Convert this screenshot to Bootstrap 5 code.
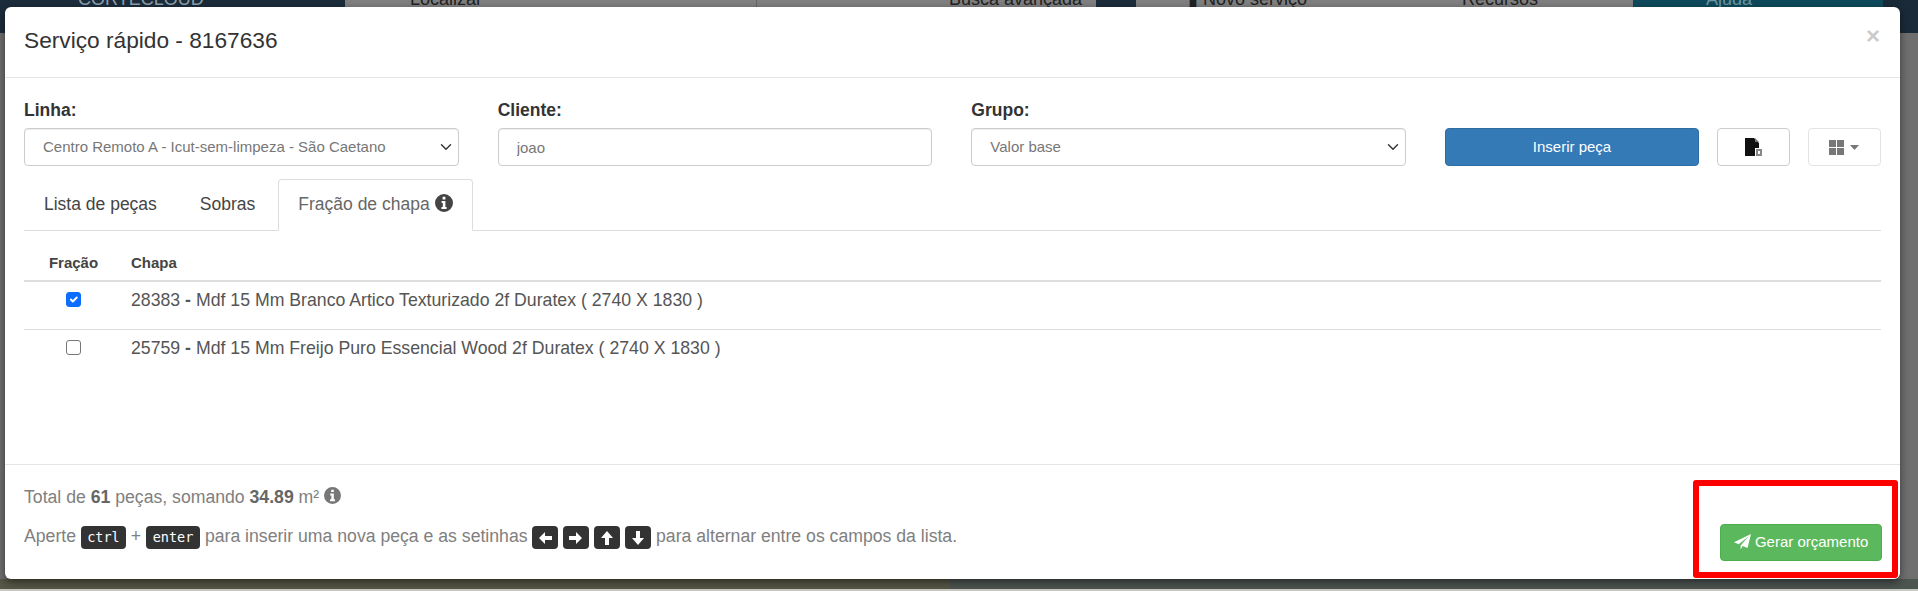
<!DOCTYPE html>
<html lang="pt-BR">
<head>
    <meta charset="UTF-8">
    <meta name="viewport" content="width=device-width, initial-scale=1.0">
    <title>Serviço rápido</title>
    <link href="https://cdn.jsdelivr.net/npm/bootstrap@5.3.0/dist/css/bootstrap.min.css" rel="stylesheet">
    <style>
        html, body { height: 591px; overflow: hidden; }
        body {
            position: relative;
            width: 1918px;
            font-family: "Liberation Sans", Arial, sans-serif;
            font-size: 15px;
            color: #444;
            background: #6f6f6f;
        }
        /* pagina escurecida atras do modal */
        .fundo-topo { height: 33px; overflow: hidden; background: #808080; color: #222; font-size: 18px; }
        .fundo-topo span { display: block; margin-top: -11px; line-height: 20px; white-space: nowrap; }
        .seg-marca { width: 345px; background: #1c2c3b; color: #8fa0ac; padding-left: 78px; }
        .seg-a { width: 412px; padding-left: 65px; border-right: 1px solid #666; }
        .seg-b { width: 339px; padding-left: 192px; }
        .seg-c { width: 40px; background: #1c2c3b; }
        .seg-d { width: 497px; padding-left: 52px; }
        .seg-ajuda { width: 250px; background: #0e4a5b; color: #6d97a5; padding-left: 73px; }
        .seg-fim { width: 35px; background: #1a2a38; }
        .fundo-base { position: absolute; left: 0; right: 0; bottom: 0; height: 12px; border-bottom: 2px solid #c9c9c4; }
        .base-a { width: 950px; background: #565745; }
        .base-b { width: 968px; background: #4d5551; }

        .janela {
            position: absolute;
            left: 5px;
            top: 7px;
            width: 1895px;
            height: 572px;
        }
        .janela .modal-content { height: 100%; background: #fff; border: 0; border-radius: 6px; box-shadow: 0 3px 9px rgba(0,0,0,.5); }
        .janela .modal-header { height: 71px; padding: 0 19px; border-bottom: 1px solid #e5e5e5; }
        .titulo { font-size: 22.7px; font-weight: 400; color: #333; margin: -2px 0 0; }
        .fechar { font-size: 24px; font-weight: 700; line-height: 1; color: #ccc; border: 0; background: none; padding: 0; margin-right: 1px; margin-top: -13px; }
        .janela .modal-body { padding: 22px 19px 0; }

        .campos { display: grid; grid-template-columns: repeat(4, 1fr); column-gap: 39px; height: 79px; }
        .campos label { display: block; font-size: 17.5px; font-weight: 700; color: #333; line-height: 24px; margin-top: -2px; margin-bottom: 6px; }
        .campos .form-control, .campos .form-select {
            height: 38px;
            font-size: 15px;
            color: #777;
            padding: 0 18px;
            border-color: #ccc;
            border-radius: 4px;
            box-shadow: inset 0 1px 1px rgba(0,0,0,.075);
        }
        .campos .form-select { background-position: right 4px center; }
        .acoes { padding-top: 28px; gap: 18px; }
        .acoes .btn { height: 38px; font-size: 15px; border-radius: 4px; padding: 0; }
        .btn-inserir { width: 254px; background: #337ab7; border-color: #2e6da4; color: #fff; }
        .btn-icone { width: 73px; background: #fff; border: 1px solid #ccc; display: flex; align-items: center; justify-content: center; gap: 6px; }
        .btn-claro { border-color: #e3e3e3; }

        .abas { border-bottom: 1px solid #ddd; height: 52px; gap: 3px; }
        .abas .nav-link {
            height: 52px;
            padding: 0 19px;
            font-size: 17.5px;
            line-height: 48px;
            color: #444;
            border: 1px solid transparent;
            border-radius: 4px 4px 0 0;
            margin-bottom: -1px;
        }
        .abas .nav-link.active { color: #666; background: #fff; border-color: #ddd #ddd #fff; }
        .ico-info { width: 18px; height: 18px; vertical-align: -2px; fill: #444; }

        .tabela { margin: 0; table-layout: fixed; color: #555; }
        .tabela th { font-size: 15px; font-weight: 700; color: #444; padding: 19px 0 6px; height: 50px; border-bottom: 2px solid #ddd; background: none; }
        .tabela td { height: 48px; padding: 5px 0 0; font-size: 17.7px; vertical-align: top; border-bottom: 1px solid #ddd; color: #555; background: none; }
        .tabela tr:last-child td { border-bottom: 0; }
        .tabela .form-check-input { width: 15px; height: 15px; margin: 5px 0 0; border-color: #777; border-radius: 3px; }
        .tabela .form-check-input:checked { background-color: #0d6efd; border-color: #0d6efd; }

        .janela .modal-footer {
            display: flex;
            flex-wrap: nowrap;
            justify-content: space-between;
            align-items: flex-end;
            height: 115px;
            margin-top: auto;
            padding: 0 18px 18px 19px;
            border-top: 1px solid #e5e5e5;
            border-radius: 0;
        }
        .janela .modal-footer > * { margin: 0; }
        .janela .modal-footer .rodape-txt { margin-bottom: 12px; }
        .rodape-txt { color: #808080; font-size: 17.65px; line-height: 26px; }
        .rodape-txt b { color: #666; }
        .rodape-txt p { margin: 0; }
        .rodape-txt p + p { margin-top: 13px; }
        .ico-info-cinza { width: 17px; height: 17px; vertical-align: -1px; fill: #777; }
        .tecla {
            display: inline-flex;
            align-items: center;
            justify-content: center;
            height: 23px;
            padding: 0;
            width: 45px;
            background: #333;
            color: #fff;
            border-radius: 4px;
            font-family: "DejaVu Sans Mono", monospace;
            font-size: 13.5px;
            line-height: 1;
            vertical-align: 0;
        }
        .tecla-larga { width: 54px; }
        .tecla-seta { width: 26px; vertical-align: -4px; }
        .tecla-seta svg { width: 16px; height: 16px; fill: #fff; }
        .btn-gerar {
            width: 162px;
            height: 37px;
            padding: 0;
            font-size: 15px;
            background: #5cb85c;
            border: 1px solid #4cae4c;
            color: #fff;
            border-radius: 4px;
        }
        .btn-gerar svg { width: 17px; height: 16px; fill: #fff; vertical-align: -3px; }

        /* marcacao vermelha do print */
        .destaque {
            position: absolute;
            left: 1693px;
            top: 480px;
            width: 205px;
            height: 98px;
            border: 6px solid #f00;
            border-radius: 3px;
        }
    </style>
</head>
<body>
    <div class="fundo-topo d-flex">
        <div class="seg-marca"><span>CORTECLOUD</span></div>
        <div class="seg-a"><span>Localizar</span></div>
        <div class="seg-b"><span>Busca avançada</span></div>
        <div class="seg-c"></div>
        <div class="seg-d"><span>▮ Novo serviço &nbsp; &nbsp; &nbsp; &nbsp; &nbsp; &nbsp; &nbsp; &nbsp; &nbsp; &nbsp; &nbsp; &nbsp; &nbsp; &nbsp; &nbsp; Recursos</span></div>
        <div class="seg-ajuda"><span>Ajuda</span></div>
        <div class="seg-fim"></div>
    </div>
    <div class="fundo-base d-flex">
        <div class="base-a"></div>
        <div class="base-b"></div>
    </div>

    <div class="janela">
        <div class="modal-content">
            <div class="modal-header">
                <h4 class="titulo">Serviço rápido - 8167636</h4>
                <button type="button" class="fechar ms-auto">×</button>
            </div>
            <div class="modal-body">
                <div class="campos">
                    <div>
                        <label for="linha">Linha:</label>
                        <select id="linha" class="form-select"><option>Centro Remoto A - Icut-sem-limpeza - São Caetano</option></select>
                    </div>
                    <div>
                        <label for="cliente">Cliente:</label>
                        <input id="cliente" type="text" class="form-control" value="joao">
                    </div>
                    <div>
                        <label for="grupo">Grupo:</label>
                        <select id="grupo" class="form-select"><option>Valor base</option></select>
                    </div>
                    <div class="acoes d-flex">
                        <button type="button" class="btn btn-inserir">Inserir peça</button>
                        <button type="button" class="btn btn-icone">
                            <svg width="17" height="18" viewBox="0 0 17 18"><path fill="#111" d="M0 0h9l5 5v5h-4v8H0z"/><path fill="#777" d="M10 0l4 4h-4z"/><path fill="#888" d="M11 11h6v7h-6z"/><path fill="#fff" d="M13 13h2v3h-2z"/></svg>
                        </button>
                        <button type="button" class="btn btn-icone btn-claro">
                            <svg width="15" height="15" viewBox="0 0 15 15" fill="#777"><path d="M0 0h7v7H0zM8 0h7v7H8zM0 8h7v7H0zM8 8h7v7H8z"/></svg>
                            <svg width="9" height="5" viewBox="0 0 9 5" fill="#777"><path d="M0 0h9L4.5 5z"/></svg>
                        </button>
                    </div>
                </div>

                <ul class="nav nav-tabs abas">
                    <li class="nav-item"><a class="nav-link" href="#">Lista de peças</a></li>
                    <li class="nav-item"><a class="nav-link" href="#">Sobras</a></li>
                    <li class="nav-item">
                        <a class="nav-link active" href="#">Fração de chapa
                            <svg class="ico-info" viewBox="0 0 18 18"><path fill-rule="evenodd" d="M9 0a9 9 0 1 0 0 18A9 9 0 0 0 9 0zM7.6 2.8h2.8v2.6H7.6zM6.6 7h3.8v6h1.2v2H6.4v-2h1.4V9H6.6z"/></svg>
                        </a>
                    </li>
                </ul>

                <table class="table tabela">
                    <colgroup><col style="width: 107px"><col></colgroup>
                    <thead>
                        <tr><th class="text-center pe-2">Fração</th><th>Chapa</th></tr>
                    </thead>
                    <tbody>
                        <tr>
                            <td class="text-center pe-2"><input class="form-check-input" type="checkbox" checked></td>
                            <td>28383 <b>-</b> Mdf 15 Mm Branco Artico Texturizado 2f Duratex ( 2740 X 1830 )</td>
                        </tr>
                        <tr>
                            <td class="text-center pe-2"><input class="form-check-input" type="checkbox"></td>
                            <td>25759 <b>-</b> Mdf 15 Mm Freijo Puro Essencial Wood 2f Duratex ( 2740 X 1830 )</td>
                        </tr>
                    </tbody>
                </table>
            </div>
            <div class="modal-footer">
                <div class="rodape-txt">
                    <p>Total de <b>61</b> peças, somando <b>34.89</b> m²
                        <svg class="ico-info-cinza" viewBox="0 0 18 18"><path fill-rule="evenodd" d="M9 0a9 9 0 1 0 0 18A9 9 0 0 0 9 0zM7.6 2.8h2.8v2.6H7.6zM6.6 7h3.8v6h1.2v2H6.4v-2h1.4V9H6.6z"/></svg>
                    </p>
                    <p>Aperte <span class="tecla">ctrl</span> + <span class="tecla tecla-larga">enter</span> para inserir uma nova peça e as setinhas
                        <span class="tecla tecla-seta"><svg viewBox="0 0 16 16"><path d="M8 2 2 8l6 6V10h7V6H8z"/></svg></span>
                        <span class="tecla tecla-seta"><svg viewBox="0 0 16 16"><path d="m8 2 6 6-6 6v-4H1V6h7z"/></svg></span>
                        <span class="tecla tecla-seta"><svg viewBox="0 0 16 16"><path d="M8 1 2 8h4v7h4V8h4z"/></svg></span>
                        <span class="tecla tecla-seta"><svg viewBox="0 0 16 16"><path d="M8 15 2 8h4V1h4v7h4z"/></svg></span>
                        para alternar entre os campos da lista.</p>
                </div>
                <button type="button" class="btn btn-gerar">
                    <svg viewBox="0 0 17 16"><path d="M17 0 13.5 14 8.6 11.9 6.6 15.5V11.6L14.5 2.5 4.7 10.3 0 8.3z"/></svg> Gerar orçamento
                </button>
            </div>
        </div>
    </div>

    <div class="destaque"></div>

    <script src="https://cdn.jsdelivr.net/npm/bootstrap@5.3.0/dist/js/bootstrap.bundle.min.js"></script>
</body>
</html>
